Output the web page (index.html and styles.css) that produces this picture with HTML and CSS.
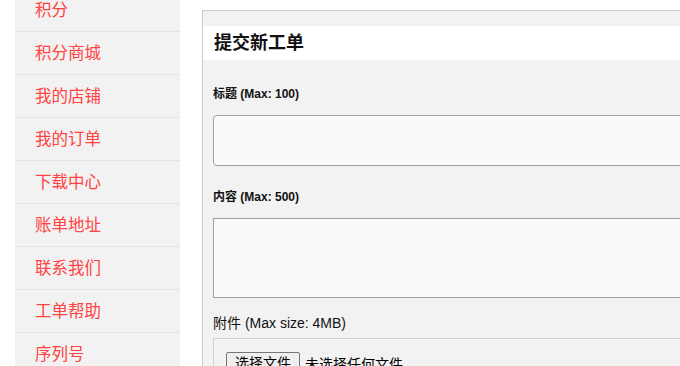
FILE: index.html
```html
<!DOCTYPE html>
<html lang="zh">
<head>
<meta charset="utf-8">
<title>提交新工单</title>
<link rel="stylesheet" href="styles.css">
</head>
<body>
<div class="page">
  <nav class="sidebar">
    <ul class="menu">
      <li><a href="#">积分</a></li>
      <li><a href="#">积分商城</a></li>
      <li><a href="#">我的店铺</a></li>
      <li><a href="#">我的订单</a></li>
      <li><a href="#">下载中心</a></li>
      <li><a href="#">账单地址</a></li>
      <li><a href="#">联系我们</a></li>
      <li><a href="#">工单帮助</a></li>
      <li><a href="#">序列号</a></li>
    </ul>
  </nav>
  <main class="panel">
    <h2 class="panel-title">提交新工单</h2>
    <form class="form">
      <label class="label label-first">标题 (Max: 100)</label>
      <div class="input"></div>
      <label class="label label-second">内容 (Max: 500)</label>
      <div class="textarea"></div>
      <div class="attach-label">附件 (Max size: 4MB)</div>
      <div class="attach-box">
        <span class="file-btn">选择文件</span><span class="file-text">未选择任何文件</span>
      </div>
    </form>
  </main>
</div>
</body>
</html>
```
FILE: styles.css
```css
html, body {
  margin: 0;
  padding: 0;
  background: #fff;
  font-family: "Liberation Sans", Arial, "Noto Sans CJK SC", sans-serif;
  overflow: hidden;
}
.page {
  display: flex;
  align-items: flex-start;
  padding-left: 15px;
  height: 366px;
  overflow: hidden;
}
.sidebar {
  width: 165px;
  flex-shrink: 0;
  background: #f2f2f2;
  margin-top: -11px;
}
.menu {
  list-style: none;
  margin: 0;
  padding: 0;
}
.menu li {
  height: 42px;
  box-sizing: content-box;
  border-bottom: 1px solid #e4e4e4;
  display: flex;
  align-items: center;
}
.menu a {
  color: #ff4343;
  text-decoration: none;
  font-size: 16.5px;
  padding-left: 20px;
  padding-bottom: 3px;
}
.panel {
  margin-left: 22px;
  margin-top: 10px;
  width: 700px;
  flex-shrink: 0;
  border: 1px solid #cccccc;
  background: #f2f2f2;
  padding-top: 15px;
  height: 400px;
}
.panel-title {
  margin: 0;
  background: #fff;
  height: 34px;
  line-height: 34px;
  padding-left: 11px;
  font-size: 18px;
  font-weight: bold;
  color: #111;
}
.form {
  padding: 0 10px;
  display: flex;
  flex-direction: column;
}
.label {
  font-size: 12px;
  font-weight: bold;
  line-height: 16px;
  color: #111;
}
.label-first { margin-top: 26px; }
.label-second { margin-top: 23px; }
.input {
  margin-top: 13px;
  height: 49px;
  border: 1px solid #a0a0a0;
  border-radius: 4px;
  background: #fafafa;
}
.textarea {
  margin-top: 13px;
  height: 78px;
  border: 1px solid #a0a0a0;
  background: #fafafa;
}
.attach-label {
  margin-top: 16px;
  font-size: 14px;
  line-height: 18px;
  color: #111;
}
.attach-box {
  margin-top: 6px;
  border: 1px solid #d0d0d0;
  background: #f2f2f2;
  padding: 13px 12px;
  display: flex;
  align-items: center;
}
.file-btn {
  display: inline-block;
  font-size: 14px;
  line-height: 18px;
  padding: 1px 8px;
  border: 1px solid #767676;
  border-radius: 2px;
  background: #efefef;
  color: #000;
}
.file-text {
  font-size: 14px;
  margin-left: 5px;
  color: #000;
}
```
